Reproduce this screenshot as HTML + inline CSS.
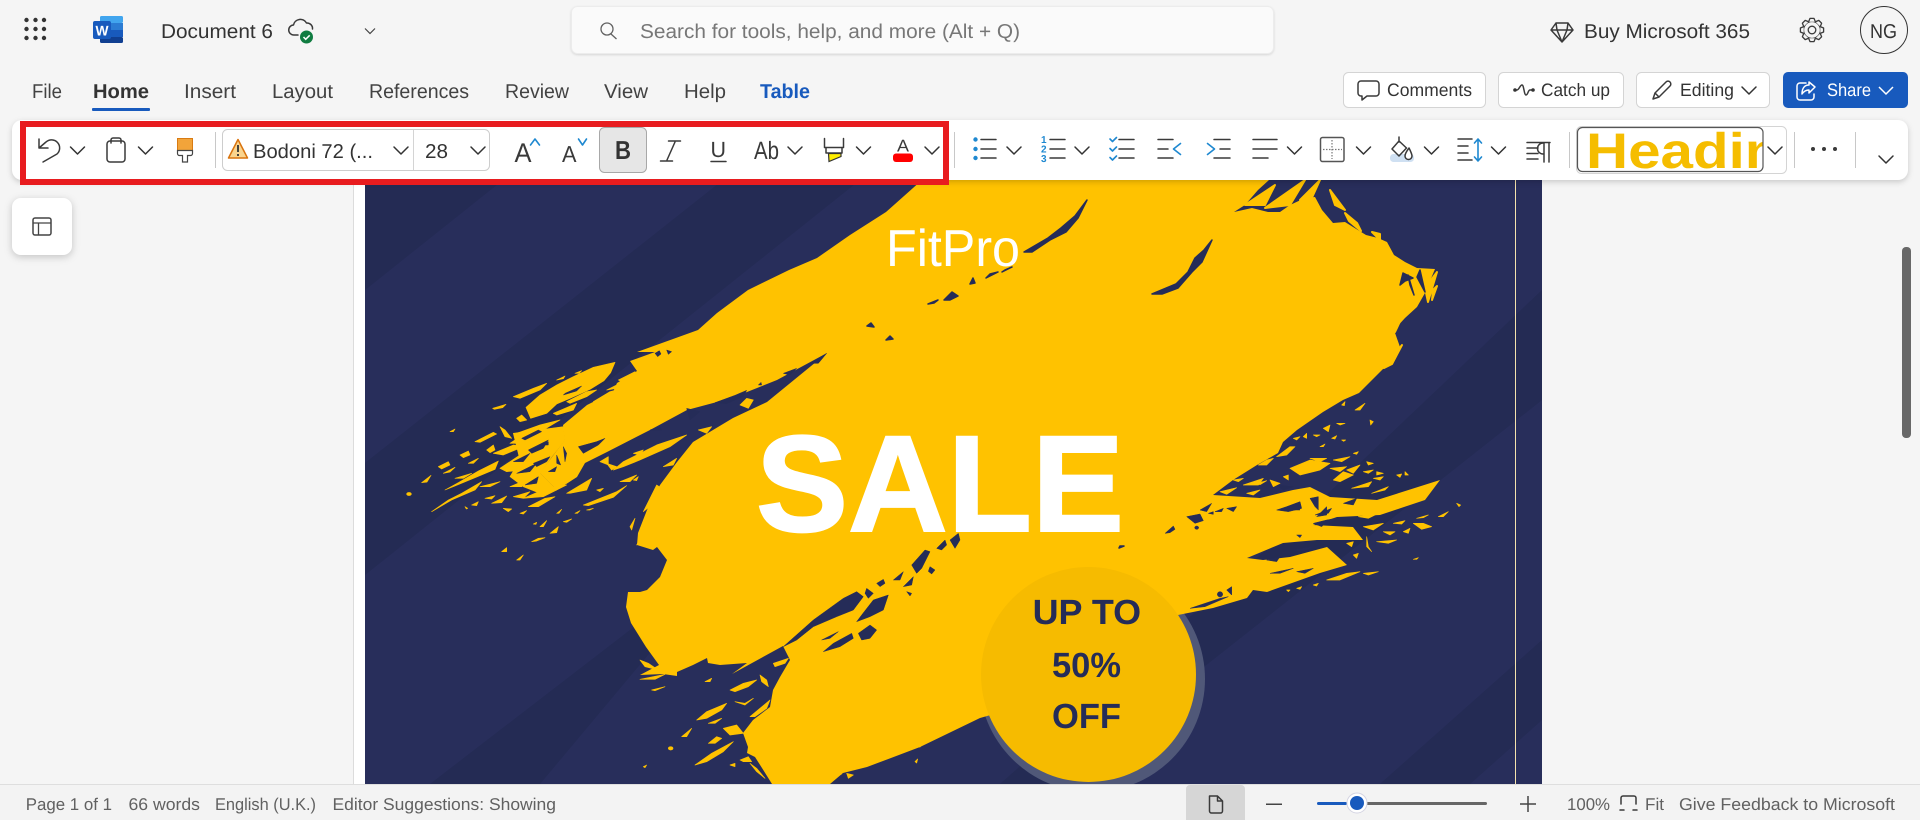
<!DOCTYPE html>
<html lang="en"><head><meta charset="utf-8"><title>Document 6 - Word</title>
<style>
html,body{margin:0;padding:0;background:#f5f5f5;width:1920px;height:820px;overflow:hidden}
svg{display:block}
text{font-family:"Liberation Sans",sans-serif;fill:#333;text-rendering:geometricPrecision}
.t{font-size:20px;fill:#424242}
.s{font-size:17px;fill:#616161}
.b{font-size:18px;fill:#333}
.ic{fill:none;stroke:#3a3a3a;stroke-width:1.5;stroke-linecap:round;stroke-linejoin:round}
.bl{fill:none;stroke:#1e88d0;stroke-width:1.6;stroke-linecap:round;stroke-linejoin:round}
.y{fill:#ffc200;stroke:#ffc200;stroke-width:2;stroke-linejoin:round}
.n{fill:#252c58;stroke:#252c58;stroke-width:1.5;stroke-linejoin:round}
</style></head>
<body>
<svg xmlns="http://www.w3.org/2000/svg" width="1920" height="820" viewBox="0 0 1920 820">
<defs>
<g id="c"><path d="M0 0l7 7 7-7" fill="none" stroke="#333" stroke-width="1.5" stroke-linecap="round" stroke-linejoin="round"/></g>
<path id="th" d="M-3.400 -8.300L-2 -11.600H2L3.400 -8.300" fill="#f5f5f5" stroke="#3a3a3a" stroke-width="1.300" stroke-linejoin="round"/>
<clipPath id="art"><rect x="365" y="180" width="1177" height="604"/></clipPath>
<clipPath id="hd"><rect x="1578" y="128" width="185" height="43"/></clipPath>
</defs>
<rect width="1920" height="820" fill="#f5f5f5"/>

<!-- document -->
<rect x="353" y="170" width="1" height="614" fill="#dcdcdc"/>
<rect x="354" y="170" width="11" height="614" fill="#fff"/>
<g clip-path="url(#art)">
<rect x="365" y="180" width="1177" height="604" fill="#282e5b"/>
<g fill="#242b54">
<path d="M365 180H503L365 290z"/>
<path d="M723 180H860L365 575V463z"/>
<path d="M740 545L630 630 430 784H540z"/>
<path d="M1542 290V400L1200 670 1100 784H1000L1300 520z"/>
<path d="M1542 640V720L1470 784H1380z"/>
</g>
<circle cx="1092" cy="679" r="113" fill="#505878"/>
<!-- main brush -->
<path fill="#ffc200" d="M922 180H1269L1258 190 1245 205 1234 212 1252 208 1268 212 1280 212 1290 205 1305 198 1315 197 1322 210 1333 223 1345 222 1353 227 1366 235 1378 238 1387 242 1394 255 1405 262 1417 268 1435 269 1425 293 1417 307 1405 318 1394 330 1400 347 1384 368 1359 393 1343 400 1323 412 1297 430 1283 442 1278 453 1257 465 1233 480 1213 495 1260 498 1293 490 1310 487 1330 497 1377 500 1440 480 1425 500 1380 515 1337 517 1313 525 1353 527 1363 540 1317 540 1283 543 1247 558 1263 560 1290 557 1327 547 1347 565 1320 573 1267 592 1253 590 1247 598 1213 608 1178 615 1185 630 1080 690 980 718 920 747 867 767 843 773 830 784V790H772V784L762 768 755 757 747 753 748 747 743 733 753 720 770 707 773 690 780 677 790 660 783 646 732 674 747 663 720 665 708 663 707 658 693 665 677 672 677 676 663 674 640 675 659 665 646 647 631 623 626 607 628 592 640 592 647 590 660 577 667 560 657 547 653 550 637 545 638 533 647 510 660 485 677 462 693 442 733 418 767 402 827 353 777 380 747 392 717 402 687 410 650 430 607 452 585 463 577 477 557 490 540 473 552 457 565 440 563 425 587 405 613 392 617 383 637 371 630 361 655 352 637 352 698 330 717 313 748 290 789 270 817 258 850 235 886 212z"/>

<!-- left spray (crop coordinates) -->
<g transform="translate(400 330) scale(.33333)">
<path class="y" d="M645 97L580 112 520 140 470 165 420 195 378 232 392 265 440 250 470 222 510 205 570 178 612 152 632 128zM340 200L400 175 440 160 420 180 360 205zM278 235l40-12-10 10-25 5zM470 150l25-12-5 8zM525 130l20-8-8 8z"/>
<path class="y" d="M500 215l60-30 30-5-30 20-50 20zM580 215l50-30 40-10-30 25-50 20zM620 180l40-20-10 15zM600 240l10-8-5 10zM460 250l70-30-10 20-50 15zM655 150l50-25 5 8-40 25zM690 175l25-10-15 12z"/>
<path class="y" d="M225 335l55-28 10 5-50 25zM150 305l15-8-5 8zM65 458l28-22-12 20zM20 492a6 4 0 1 0 14 0 6 4 0 1 0-14 0zM115 410l30-15 5 10-25 12zM180 375l25-12 5 12-20 8zM205 400l30-15-15 15zM130 430l35-18-15 14zM260 360l20-15 5 15-15 8zM300 290l15 10 20 25-20-5zM350 265l15-10 15 15-20 5zM330 340l30-20-5 20zM350 310l70-25 60-15-50 30-60 15zM280 370l60-25 30 5-60 25z"/>
<path class="y" d="M135 480l40-22 60-35 60-30-10 25-60 25-60 25zM95 545l50-35 40-20 60-35-20 25-70 30zM165 445l50-15-25 15zM240 470l60-15-30 15zM215 525l20-10-5 12zM195 530l8 5-4 2zM255 505l30-8-10 10zM300 415l60-40 80-25-10 40-60 30-50 5zM275 520l45-22-15 20zM310 535l25 2-10 8zM360 550l20-8-10 10zM330 470l60-25-25 25zM370 505l70-30 60-10-70 35zM340 500l50-15-20 20zM385 530l50-25 30-5-50 30zM500 490l75-45-15 35-50 10z"/>
<path class="y" d="M550 525l100-40 30-18-40 35-75 25zM590 480l20-5-10 10zM660 455l50-20-20 20zM700 450l15-10-5 12zM400 582l10-5-2 6zM420 590l20-18-10 18zM490 575l25-8-15 10zM450 610l25-20-5 18zM395 635l20-10 20-2-25 10zM305 665l15-12 0 12zM350 690l20-15-10 15zM470 550l15-12-8 12zM525 550l15-8-8 8zM560 540l20-5-10 5z"/>
<path class="y" d="M340 310L490 290 495 330 455 380 420 430 470 480 420 490 370 470 330 440 360 390z"/>
<path class="y" d="M1020 225l20-20 20 5-15 25zM895 300l40-10-15 20zM640 420l30-25 100-50 90-30-50 35-90 40-50 20zM700 370l30-10-10 15zM600 395l25-15 0 25zM620 400l30 10-15 10zM790 410l40-25-10 20zM730 545l40-80 15 10-30 50zM690 590l15-25-10 35zM710 645l30-55 10 0-20 45z"/>
<path class="n" d="M765 70l8 10 10-8-5-10zM800 60l15 5-10 8zM495 190l50-22-15 15-40 12zM535 350l55-15 25-10-20 20-45 25zM860 235l40 10-30 25zM750 300l30-10 5 10zM945 218l60-22 35-15-10 18-50 22zM1150 130l40-15-20 20zM1230 100l50-30-25 30zM1075 165l8-8 2 8zM365 325l50-25 10 5-50 25zM385 360l60-30-15 25-35 15zM340 395l50-25-20 25zM350 430l60-30-20 25zM400 400l50-20-10 15-30 15zM375 465l40-25-5 20zM445 425l25-15-5 15zM490 350l10 20-5 25zM470 375l12 30-12-5zM425 345l20-10 0 10z"/>
</g>

<!-- right spray -->
<g transform="translate(1150 400) scale(.33333)">
<path class="n" d="M45 400l25-22 5 10-15 10zM110 350l40-8 10 20-25 8zM150 330l35-20-15 25zM140 378a6 5 0 1 0 .1 0zM175 340l15-5 0 8zM195 335l25-10-5 10zM230 325l30-5-10 15zM380 330l30-10 40-15 5 20-40 10zM490 370l35 0-10 10zM210 575a8 8 0 1 0 .1 0zM230 570l15-10 0 25zM440 405l15 0-5 8zM120 625l90-30 25-5-70 30zM380 255l50 5-30 10zM490 370l40-10 30-5-30 20zM495 345l50-20-10 15zM390 330l50-20 10 20zM430 450l60-10-30 15zM440 515l50-10-25 15zM350 480l40-10-10 15zM360 520l70-15-40 15zM500 350l30-30 0 25zM580 310l40-15-10 20zM480 295l25-5 0 40-10-10z"/>
<path class="y" d="M325 195l25-15 20-5-20 20zM380 170l40-30 15 0-25 25zM430 115l20-5-10 10zM460 110l10-10 0 15zM250 240l30-5-15 10zM280 255l60-20-15 20zM320 250l30-8-20 12zM360 240l30 10-20 10zM400 230l15-5 0 15zM210 275l50-12-30 20zM290 280l40-10-20 15z"/>
<path class="y" d="M490 105l20 0-10 5zM520 85l20-10-5 20zM560 70l25 0-15 5zM545 115l15-8-5 10zM575 120l12 0-6 4zM510 140l15-8-5 8zM610 160l15-5-5 8zM660 60l10 5-8 10zM575 15l10-10-2 12zM615 30l30-20-15 20zM420 205l60-25 60 10-30 20-60 15zM480 175l50 0-20 10zM550 180l50-10-25 15zM650 185l20 5-15 5zM640 215l30-5-15 10zM680 215l20 5-20 5zM740 225l15-3-5 10zM765 215l10 10-10 0zM540 205l50-5-20 15zM590 210l40-15-20 25zM550 240l30-25 30 10-40 20zM605 265l60-20-10 15zM670 235l30-5-10 10zM665 280l50-20-10 10z"/>
<path class="y" d="M625 350l60-10-30 15zM730 370l35-8-10 10zM760 395l20-10-5 15zM790 370l30 0 25 10-30 8zM800 355l35-10-15 8zM865 350l30-15-15 15zM920 310l12 5-5 5zM640 380l60-10-30 20zM650 410l5 30 10 15-15-15zM680 425l60-5-25 10zM700 395l35 0-15 10zM790 478l15-5-5 5zM530 540l60-20 40-5-60 25zM640 520l45-5-30 10zM440 565l15-5-5 8zM410 570l10 0-5 5zM490 555l15-5-5 8zM590 430l20-5-5 15zM610 465l15-5-5 15z"/>
</g>

<!-- lower gash and wedge streaks -->
<g transform="translate(640 520) scale(.33333)">
<path class="n" d="M430 380L520 300 610 235 650 215 670 230 640 270 590 290 520 320 470 360zM680 205l20 15-15 15-10-15zM745 225L700 240 665 285 650 305 690 290 730 270zM545 360l50-25-25 20zM550 395l30-25 55-30 5 15-40 25zM655 340l35-25 20 15-20 25-25 5zM710 190l20-12 5 12-15 10zM815 135l40-45 15 5-25 50-15 15zM890 85l25-25 5 15-15 15zM930 60l25-20 5 20-15 25zM870 140l15 10-10 12-10-8zM760 180l30-25-10 25zM790 200l30-30-5 25zM800 215l15 5-5 8z"/>
<path class="y" d="M170 600l30-25 60-25-15 20-45 25zM165 735l50-35 65-35-30 30-50 30zM270 510l40-20 40-10-25 20-40 15zM205 670l25-20 15 5-20 15zM125 650l30-25-15 25zM85 685a7 5 0 1 0 14 0 7 5 0 1 0-14 0zM360 465l20 15 5 20-20-15zM285 545l30 5 25-15-25 20zM330 590l60-50-10 25-35 25zM400 430l45-15-10 15-30 10zM250 625l40-10 20 25-40 5zM270 735l15-5 0 10zM300 720l25-10 10 15-25 0zM205 610l40-15-20 15zM10 740l10-5-5 8zM330 730l20 15 25 30-25-20z"/>
<path class="y" d="M0 478l75-15-30 15zM35 510l40-10-30 12zM195 485l20-10-5 10zM565 770l40-8-20 10zM620 760l20 5-15 10zM825 725l8-8-3 12zM835 680l10-5-5 6zM0 420l25 10 30 20-40-10zM20 355l20-10-10 12zM85 80l15-8-5 10z"/>
</g>

<!-- upper navy streaks on body -->
<path class="n" d="M1087 200L1075 216 1061 228 1048 238 1024 252 1032 252 1050 240 1066 232 1078 218z"/>
<path class="n" d="M1212 240L1204 250 1195 258 1188 272 1176 284 1152 294 1162 294 1178 288 1192 272 1202 262z"/>
<path class="n" stroke-width=".5" d="M958 296L952 292 944 300 950 300zM975 283L973 278 970 284zM934 303L928 304 938 300zM871 323L867 326 874 327zM890 336L886 340 893 339zM998 272L990 274 986 278zM1012 267L1005 270 1002 272zM1102 528L1100 520 1099 528zM1124 546l-4 0-1 2z"/>
<!-- top splash yellow slivers -->
<path class="y" stroke-width=".5" d="M1245 205l30-20-10 20zM1265 208l40-28-15 25zM1300 200l20-20-10 22zM1330 190l15 20-10-5zM1345 213l12 10 4 8-12-10zM1372 232l8 2 0 6zM1400 262l8 10-2 4zM1425 288L1437 272 1428 302zM1388 330L1410 300 1395 332zM1437 286L1432 300 1433 290zM1384 368L1402 345 1392 364z"/>
<path class="n" stroke-width=".5" d="M1400 285l3-12 10 5-8 3zM1420 270l5 22-8-15zM1408 275l6 20-4-10z"/>

<!-- circle -->
<circle cx="1088.500" cy="674.500" r="107.500" fill="#f6bb00"/>
<rect x="1515" y="180" width="1" height="604" fill="#f5e3ad"/>
<text x="756" y="531" font-size="137" font-weight="700" textLength="368" lengthAdjust="spacingAndGlyphs" style="fill:#fff;stroke:#fff;stroke-width:2">SALE</text>
<text x="886" y="266" font-size="52" textLength="134" lengthAdjust="spacingAndGlyphs" style="fill:#fff">FitPro</text>
<text x="1032.600" y="624" font-size="35" font-weight="700" textLength="108.500" lengthAdjust="spacingAndGlyphs" style="fill:#252c58">UP TO</text>
<text x="1052" y="677" font-size="35" font-weight="700" textLength="69" lengthAdjust="spacingAndGlyphs" style="fill:#252c58">50%</text>
<text x="1052" y="728" font-size="35" font-weight="700" textLength="69" lengthAdjust="spacingAndGlyphs" style="fill:#252c58">OFF</text>
</g>

<!-- top bar -->
<g fill="#333"><circle cx="26.500" cy="20" r="2.200"/><circle cx="35.500" cy="20" r="2.200"/><circle cx="44" cy="20" r="2.200"/><circle cx="26.500" cy="29" r="2.200"/><circle cx="35.500" cy="29" r="2.200"/><circle cx="44" cy="29" r="2.200"/><circle cx="26.500" cy="38" r="2.200"/><circle cx="35.500" cy="38" r="2.200"/><circle cx="44" cy="38" r="2.200"/></g>
<rect x="100" y="16" width="23" height="7" rx="1.500" fill="#41a5ee"/><rect x="100" y="23" width="23" height="7" fill="#2b7cd3"/><rect x="100" y="30" width="23" height="7" fill="#185abd"/><rect x="100" y="37" width="23" height="6" rx="1.500" fill="#103f91"/>
<rect x="93" y="21" width="18" height="18" rx="2" fill="#185abd"/>
<text x="95.500" y="35.500" font-size="14" font-weight="700" textLength="13" lengthAdjust="spacingAndGlyphs" style="fill:#fff">W</text>
<text x="161" y="38" font-size="20" textLength="112" lengthAdjust="spacingAndGlyphs" style="fill:#333">Document 6</text>
<path class="ic" d="M298 35h-4a5 5 0 0 1-.5-10a7 7 0 0 1 13-2a5.500 5.500 0 0 1 6 6"/>
<circle cx="306.500" cy="37" r="6.500" fill="#107c41"/><path d="M303.500 37l2.200 2.300 4-4" fill="none" stroke="#fff" stroke-width="1.500"/>
<path d="M365 28.500l5 5 5-5" fill="none" stroke="#444" stroke-width="1.200"/>
<rect x="571.500" y="6.500" width="702" height="47" rx="6" fill="#fafafa" stroke="#ececec" style="filter:drop-shadow(0 1px 1px rgba(0,0,0,.12))"/>
<circle cx="607" cy="29" r="6" fill="none" stroke="#616161" stroke-width="1.300"/><path d="M611 34l5.500 5" stroke="#616161" stroke-width="1.300" fill="none"/>
<text x="640" y="38" font-size="20" textLength="380" lengthAdjust="spacingAndGlyphs" style="fill:#777">Search for tools, help, and more (Alt + Q)</text>
<path class="ic" stroke-width="1.300" d="M1556 23h12l5 7-11 12-11-12zM1551 30h22M1557 30l5 12 5-12M1556 23l1 7M1568 23l-1 7"/>
<text x="1584" y="38" font-size="20" textLength="166" lengthAdjust="spacingAndGlyphs" style="fill:#333">Buy Microsoft 365</text>
<circle cx="1812" cy="30" r="8.500" fill="none" stroke="#3a3a3a" stroke-width="1.300"/><circle cx="1812" cy="30" r="3.800" fill="none" stroke="#3a3a3a" stroke-width="1.300"/>
<g transform="translate(1812 30)"><use href="#th"/><use href="#th" transform="rotate(45)"/><use href="#th" transform="rotate(90)"/><use href="#th" transform="rotate(135)"/><use href="#th" transform="rotate(180)"/><use href="#th" transform="rotate(225)"/><use href="#th" transform="rotate(270)"/><use href="#th" transform="rotate(315)"/></g>
<circle cx="1884" cy="30" r="23.500" fill="#f5f5f5" stroke="#333" stroke-width="1"/>
<text x="1870" y="38" font-size="20" textLength="27" lengthAdjust="spacingAndGlyphs" style="fill:#333">NG</text>

<!-- tabs -->
<text class="t" x="32" y="98" textLength="30" lengthAdjust="spacingAndGlyphs">File</text>
<text x="93" y="98" font-size="20" font-weight="700" textLength="56" lengthAdjust="spacingAndGlyphs" style="fill:#333">Home</text>
<rect x="92" y="108" width="58" height="3" rx="1" fill="#185abd"/>
<text class="t" x="184" y="98" textLength="52" lengthAdjust="spacingAndGlyphs">Insert</text>
<text class="t" x="272" y="98" textLength="61" lengthAdjust="spacingAndGlyphs">Layout</text>
<text class="t" x="369" y="98" textLength="100" lengthAdjust="spacingAndGlyphs">References</text>
<text class="t" x="505" y="98" textLength="64" lengthAdjust="spacingAndGlyphs">Review</text>
<text class="t" x="604" y="98" textLength="44" lengthAdjust="spacingAndGlyphs">View</text>
<text class="t" x="684" y="98" textLength="42" lengthAdjust="spacingAndGlyphs">Help</text>
<text x="760" y="98" font-size="20" font-weight="700" textLength="50" lengthAdjust="spacingAndGlyphs" style="fill:#185abd">Table</text>

<!-- action buttons -->
<g fill="#fff" stroke="#d4d4d4"><rect x="1343.500" y="72.500" width="142" height="35" rx="5"/><rect x="1498.500" y="72.500" width="125" height="35" rx="5"/><rect x="1636.500" y="72.500" width="133" height="35" rx="5"/></g>
<rect x="1783" y="72" width="125" height="36" rx="5" fill="#185abd"/>
<path class="ic" d="M1361 81h15a3 3 0 0 1 3 3v9a3 3 0 0 1-3 3h-9l-5 4v-4h-1a3 3 0 0 1-3-3v-9a3 3 0 0 1 3-3z"/>
<text class="b" x="1387" y="96" textLength="85" lengthAdjust="spacingAndGlyphs">Comments</text>
<path class="ic" d="M1515 90h2c2 0 3-5 5-5s2 10 4 10 2-5 4-5h3"/><circle cx="1515" cy="90" r="1.800" fill="#333"/><circle cx="1533" cy="90" r="1.800" fill="#333"/>
<text class="b" x="1541" y="96" textLength="69" lengthAdjust="spacingAndGlyphs">Catch up</text>
<path class="ic" d="M1653 99l2-6 11-11a2.500 2.500 0 0 1 4 4l-11 11zM1655 93l4 4"/>
<text class="b" x="1680" y="96" textLength="54" lengthAdjust="spacingAndGlyphs">Editing</text>
<use href="#c" x="1742" y="87"/>
<path d="M1806 83h-6a3 3 0 0 0-3 3v11a3 3 0 0 0 3 3h11a3 3 0 0 0 3-3v-3M1815 87l-6-5v3c-5 0-7 4-7 9 2-3 4-4 7-4v3z" fill="none" stroke="#fff" stroke-width="1.500" stroke-linejoin="round" stroke-linecap="round"/>
<text x="1827" y="96" font-size="18" textLength="44" lengthAdjust="spacingAndGlyphs" style="fill:#fff">Share</text>
<path d="M1879 87l7 7 7-7" fill="none" stroke="#fff" stroke-width="1.500"/>

<!-- ribbon -->
<rect x="12" y="120" width="1896" height="60" rx="10" fill="#fff" style="filter:drop-shadow(0 2px 3px rgba(0,0,0,.18))"/>
<path class="ic" d="M39 139v9h9M39 148l7-6a8 8 0 0 1 11 12l-14 8"/>
<use href="#c" x="70.500" y="147"/>
<path class="ic" d="M110 141h12a3 3 0 0 1 3 3v15a3 3 0 0 1-3 3h-12a3 3 0 0 1-3-3v-15a3 3 0 0 1 3-3zM111 143v-3a2 2 0 0 1 2-2h6a2 2 0 0 1 2 2v3"/>
<use href="#c" x="138.500" y="147"/>
<path d="M177.500 138.500h15v12h-15z" fill="#f2a43a" stroke="#d97b12"/><path d="M177.500 150.500h15v3a2 2 0 0 1-2 2h-3v6.500h-5v-6.500h-3a2 2 0 0 1-2-2z" fill="#fff" stroke="#444" stroke-width="1.200"/>
<rect x="215" y="132" width="1" height="36" fill="#c8c8c8"/>
<rect x="222.500" y="129.500" width="267" height="41" rx="5" fill="#fff" stroke="#cdcdcd"/><rect x="413" y="130" width="1" height="40" fill="#d4d4d4"/>
<path d="M238 139.500l9.500 18.500h-19z" fill="#fad48e" stroke="#d9730d" stroke-width="1.500" stroke-linejoin="round"/><path d="M238 145v7M238 154v2" stroke="#333" stroke-width="1.800" fill="none"/>
<text x="253" y="158" font-size="20" textLength="120" lengthAdjust="spacingAndGlyphs" style="fill:#333">Bodoni 72 (...</text>
<use href="#c" x="394" y="147"/>
<text x="425" y="158" font-size="20" textLength="23" lengthAdjust="spacingAndGlyphs" style="fill:#333">28</text>
<use href="#c" x="471" y="147"/>
<text x="514.500" y="162" font-size="27" textLength="17" lengthAdjust="spacingAndGlyphs" style="fill:#3a3a3a">A</text>
<path class="bl" d="M530.500 145l4.500-6 4.500 6"/>
<text x="562" y="162" font-size="23" textLength="14.500" lengthAdjust="spacingAndGlyphs" style="fill:#3a3a3a">A</text>
<path class="bl" d="M578.500 139l4 6 4-6"/>
<rect x="599.500" y="127.500" width="47" height="45" rx="5" fill="#e6e6e6" stroke="#a8a8a8"/>
<text x="615" y="159" font-size="26" font-weight="700" textLength="16" lengthAdjust="spacingAndGlyphs" style="fill:#333">B</text>
<path class="ic" d="M675 142l-8 18M668.500 141h12M660.500 161h12"/>
<text x="710.500" y="157" font-size="22" textLength="15.500" lengthAdjust="spacingAndGlyphs" style="fill:#3a3a3a">U</text>
<path class="ic" d="M711 161.500h15"/>
<text x="754" y="159" font-size="25" textLength="25" lengthAdjust="spacingAndGlyphs" style="fill:#3a3a3a">Ab</text>
<use href="#c" x="788" y="147"/>
<path class="ic" d="M824.500 138.500v9h19v-9M826 147.500v5.500h16v-5.500"/><path d="M828.500 153.500h12.500v3l-12 5z" fill="#ffef00" stroke="#333" stroke-width="1.200"/>
<use href="#c" x="856.500" y="147"/>
<text x="897" y="151.500" font-size="17" textLength="12" lengthAdjust="spacingAndGlyphs" style="fill:#3a3a3a">A</text>
<rect x="893" y="153.500" width="20" height="8.500" rx="3" fill="#f00"/>
<use href="#c" x="925" y="147"/>
<rect x="954" y="132" width="1" height="36" fill="#c8c8c8"/>
<!-- lists -->
<g fill="#1e88d0"><circle cx="975.500" cy="139.500" r="2.200"/><circle cx="975.500" cy="149" r="2.200"/><circle cx="975.500" cy="158" r="2.200"/></g>
<path class="ic" d="M981 139.500h15M981 149h15M981 158h15"/>
<use href="#c" x="1007" y="147"/>
<text x="1041" y="143" font-size="10" font-weight="700" style="fill:#1e88d0">1</text><text x="1041" y="152.500" font-size="10" font-weight="700" style="fill:#1e88d0">2</text><text x="1041" y="162" font-size="10" font-weight="700" style="fill:#1e88d0">3</text>
<path class="ic" d="M1050 139.500h15M1050 149h15M1050 158h15"/>
<use href="#c" x="1075" y="147"/>
<path class="bl" stroke-width="1.300" d="M1110 139l2.500 2.500 4-4M1110 148.500l2.500 2.500 4-4M1110 157.500l2.500 2.500 4-4"/>
<path class="ic" d="M1119 139.500h15M1119 149h15M1119 158h15"/>
<path class="ic" d="M1158 139.500h15M1158 149h10M1158 158h15"/>
<path class="bl" d="M1180.500 143.500l-7 5.500 7 5.500"/>
<path class="bl" d="M1207.500 143.500l7 5.500-7 5.500"/>
<path class="ic" d="M1214 139.500h16M1220 149h10M1214 158h16"/>
<path class="ic" d="M1253 139.500h24M1253 149h24M1253 158h15"/>
<use href="#c" x="1287.500" y="147"/>
<rect x="1320.500" y="137.500" width="23.500" height="24" rx="2" fill="none" stroke="#555" stroke-width="1.500"/>
<path d="M1332 140v19M1323 149.500h19" stroke="#777" stroke-width="1.200" stroke-dasharray="1.500 1.500" fill="none"/>
<use href="#c" x="1356.500" y="147"/>
<rect x="1390" y="154" width="24" height="8" rx="3.500" fill="#cfe0f2"/>
<path class="ic" d="M1399 137v5M1399 141l-7 8 7 7 7.500-8z"/><path class="ic" d="M1409 148c-3 4-4 6-4 8a3.500 3.500 0 0 0 7 0c0-2-1-4-3-8z" style="fill:#fff"/>
<use href="#c" x="1424.500" y="147"/>
<path class="ic" d="M1458 139h14M1458 146h10M1458 153h10M1458 160h14"/>
<path class="bl" d="M1478 153V139M1474.500 143l3.500-4 3.500 4M1478 148v13M1474.500 157l3.500 4 3.500-4"/>
<use href="#c" x="1491.500" y="147"/>
<path class="ic" d="M1527 142.500h23M1527 148h11M1527 153.500h11M1527 159h11M1544 143v19M1549 143v19M1544 143h-1a5 5 0 0 0 0 11h1"/>
<rect x="1569" y="132" width="1" height="36" fill="#c8c8c8"/>
<rect x="1576.500" y="126.500" width="210" height="47" rx="5" fill="#fff" stroke="#d4d4d4"/>
<g clip-path="url(#hd)"><text x="1586" y="168" font-size="50" font-weight="700" textLength="230" lengthAdjust="spacingAndGlyphs" style="fill:#f5bd00">Heading</text></g>
<rect x="1577.500" y="127.500" width="185.500" height="44" rx="5" fill="none" stroke="#555" stroke-width="1.200"/>
<use href="#c" x="1768" y="147"/>
<rect x="1794" y="132" width="1" height="36" fill="#c8c8c8"/>
<g fill="#3a3a3a"><circle cx="1813" cy="149" r="2"/><circle cx="1824" cy="149" r="2"/><circle cx="1835" cy="149" r="2"/></g>
<rect x="1855" y="132" width="1" height="36" fill="#c8c8c8"/>
<use href="#c" x="1879" y="156"/>

<!-- red highlight -->
<rect x="23" y="124" width="923" height="58" fill="none" stroke="#e81c1f" stroke-width="6"/>

<!-- side panel button -->
<rect x="12" y="198" width="60" height="57" rx="9" fill="#fff" style="filter:drop-shadow(0 2px 4px rgba(0,0,0,.2))"/>
<rect x="33" y="218" width="18" height="17" rx="2" fill="none" stroke="#444" stroke-width="1.500"/><path d="M33 223h18M38.500 223v12" stroke="#444" stroke-width="1.300" fill="none"/>

<!-- scrollbar -->
<rect x="1902" y="247" width="9" height="191" rx="4" fill="#686868"/>

<!-- status bar -->
<rect y="784" width="1920" height="36" fill="#f3f3f3"/><rect y="784" width="1920" height="1" fill="#dedede"/>
<text class="s" x="25.700" y="810" textLength="86.300" lengthAdjust="spacingAndGlyphs">Page 1 of 1</text>
<text class="s" x="128.500" y="810" textLength="71.500" lengthAdjust="spacingAndGlyphs">66 words</text>
<text class="s" x="215" y="810" textLength="101" lengthAdjust="spacingAndGlyphs">English (U.K.)</text>
<text class="s" x="332.500" y="810" textLength="223.500" lengthAdjust="spacingAndGlyphs">Editor Suggestions: Showing</text>
<path d="M1186 820v-31a4 4 0 0 1 4-4h51a4 4 0 0 1 4 4v31z" fill="#d6d6d6"/>
<path class="ic" d="M1209.500 796h8l5 5v10a2 2 0 0 1-2 2h-9a2 2 0 0 1-2-2zM1217.500 796v5h5"/>
<rect x="1266" y="803.500" width="16" height="1.500" fill="#444"/>
<rect x="1317" y="802" width="30" height="3" rx="1.500" fill="#185abd"/><rect x="1365" y="802" width="122" height="3" rx="1.500" fill="#666"/>
<circle cx="1357" cy="803" r="10" fill="#fff" stroke="#d4d4e2"/><circle cx="1357" cy="803" r="7" fill="#185abd"/>
<path d="M1520 804h16M1528 796v16" stroke="#444" stroke-width="1.500" fill="none"/>
<text class="s" x="1567" y="810" textLength="43" lengthAdjust="spacingAndGlyphs">100%</text>
<path class="ic" stroke-width="1.300" d="M1621 804v-6a2 2 0 0 1 2-2h11a2 2 0 0 1 2 2v6M1620 810h4M1633 810h4"/>
<text class="s" x="1645" y="810" textLength="19" lengthAdjust="spacingAndGlyphs">Fit</text>
<text class="s" x="1679" y="810" textLength="216" lengthAdjust="spacingAndGlyphs">Give Feedback to Microsoft</text>
</svg>
</body></html>
